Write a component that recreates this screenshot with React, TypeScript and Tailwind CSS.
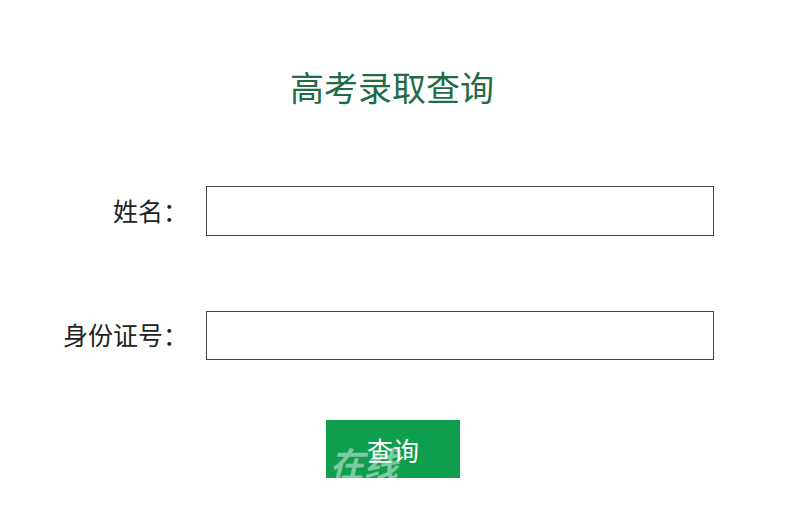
export default function App() {
  return (
    <div
      className="w-[800px] h-[517px] bg-white overflow-hidden"
      style={{ fontFamily: '"Noto Sans CJK SC", "Liberation Sans", sans-serif' }}
    >
      <h1 className="pt-[64px] h-[186px] text-center text-[34px] leading-[46px] text-[#216b45] ml-[-16px]">
        高考录取查询
      </h1>

      <div className="flex items-center h-[50px]">
        <label className="w-[190px] text-right text-[25px] text-[#222] pr-[2px]">姓名：</label>
        <input type="text" className="ml-[16px] w-[508px] h-[50px] border border-[#444] outline-none bg-white" />
      </div>

      <div className="flex items-center h-[50px] mt-[74px]">
        <label className="w-[190px] text-right text-[25px] text-[#222] pr-[2px]">身份证号：</label>
        <input type="text" className="ml-[16px] w-[508px] h-[49px] border border-[#444] outline-none bg-white" />
      </div>

      <div className="flex mt-[60px] pl-[326px]">
        <button className="relative w-[134px] h-[58px] bg-[#0f9d4e] text-white text-[26px] overflow-hidden">
          <span className="absolute left-[4px] top-[26px] text-[34px] font-bold italic text-[#7ccaa0] leading-none">
            在线
          </span>
          <span className="relative">查询</span>
        </button>
      </div>
    </div>
  );
}
